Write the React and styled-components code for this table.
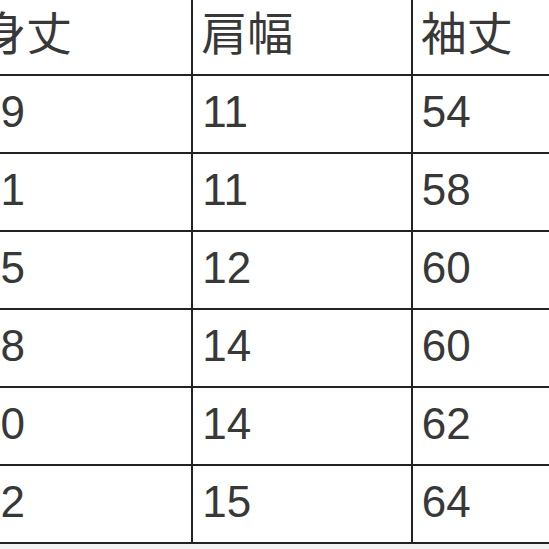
import styled, { createGlobalStyle } from "styled-components";

const Global = createGlobalStyle`
  html, body {
    margin: 0;
    padding: 0;
    background: #f2f2f2;
    overflow: hidden;
  }
`;

const Frame = styled.div`
  width: 549px;
  height: 549px;
  overflow: hidden;
`;

const Table = styled.table`
  border-collapse: collapse;
  table-layout: fixed;
  width: 662px;
  margin-left: -30px;
  margin-top: -4px;
  background: #fff;
  font-family: "Liberation Sans", "Noto Sans CJK JP", sans-serif;
  color: #383838;
`;

const Cell = styled.td`
  width: ${(p) => (p.$wide ? 211 : 209)}px;
  height: 72px;
  padding: 0 0 4px 9px;
  border: 2px solid #222;
  font-size: 44px;
  line-height: 1;
  vertical-align: middle;
  text-align: left;
  white-space: nowrap;
  overflow: hidden;
`;

const Num = styled(Cell)`
  text-indent: ${(p) => (p.$wide ? -5 : 0)}px;
`;

const Head = styled(Cell).attrs({ as: "th" })`
  font-weight: normal;
  font-size: 46px;
  padding-left: 8px;
`;

const heads = ["身丈", "肩幅", "袖丈"];

const rows = [
  ["69", "11", "54"],
  ["71", "11", "58"],
  ["75", "12", "60"],
  ["78", "14", "60"],
  ["80", "14", "62"],
  ["82", "15", "64"],
];

const App = () => {
  return (
    <Frame>
      <Global />
      <Table>
        <thead>
          <tr>
            {heads.map((h, j) => (
              <Head key={h} $wide={j === 0}>
                {h}
              </Head>
            ))}
          </tr>
        </thead>
        <tbody>
          {rows.map((r, i) => (
            <tr key={i}>
              {r.map((v, j) => (
                <Num key={j} $wide={j === 0}>
                  {v}
                </Num>
              ))}
            </tr>
          ))}
        </tbody>
      </Table>
    </Frame>
  );
};

export default App;
